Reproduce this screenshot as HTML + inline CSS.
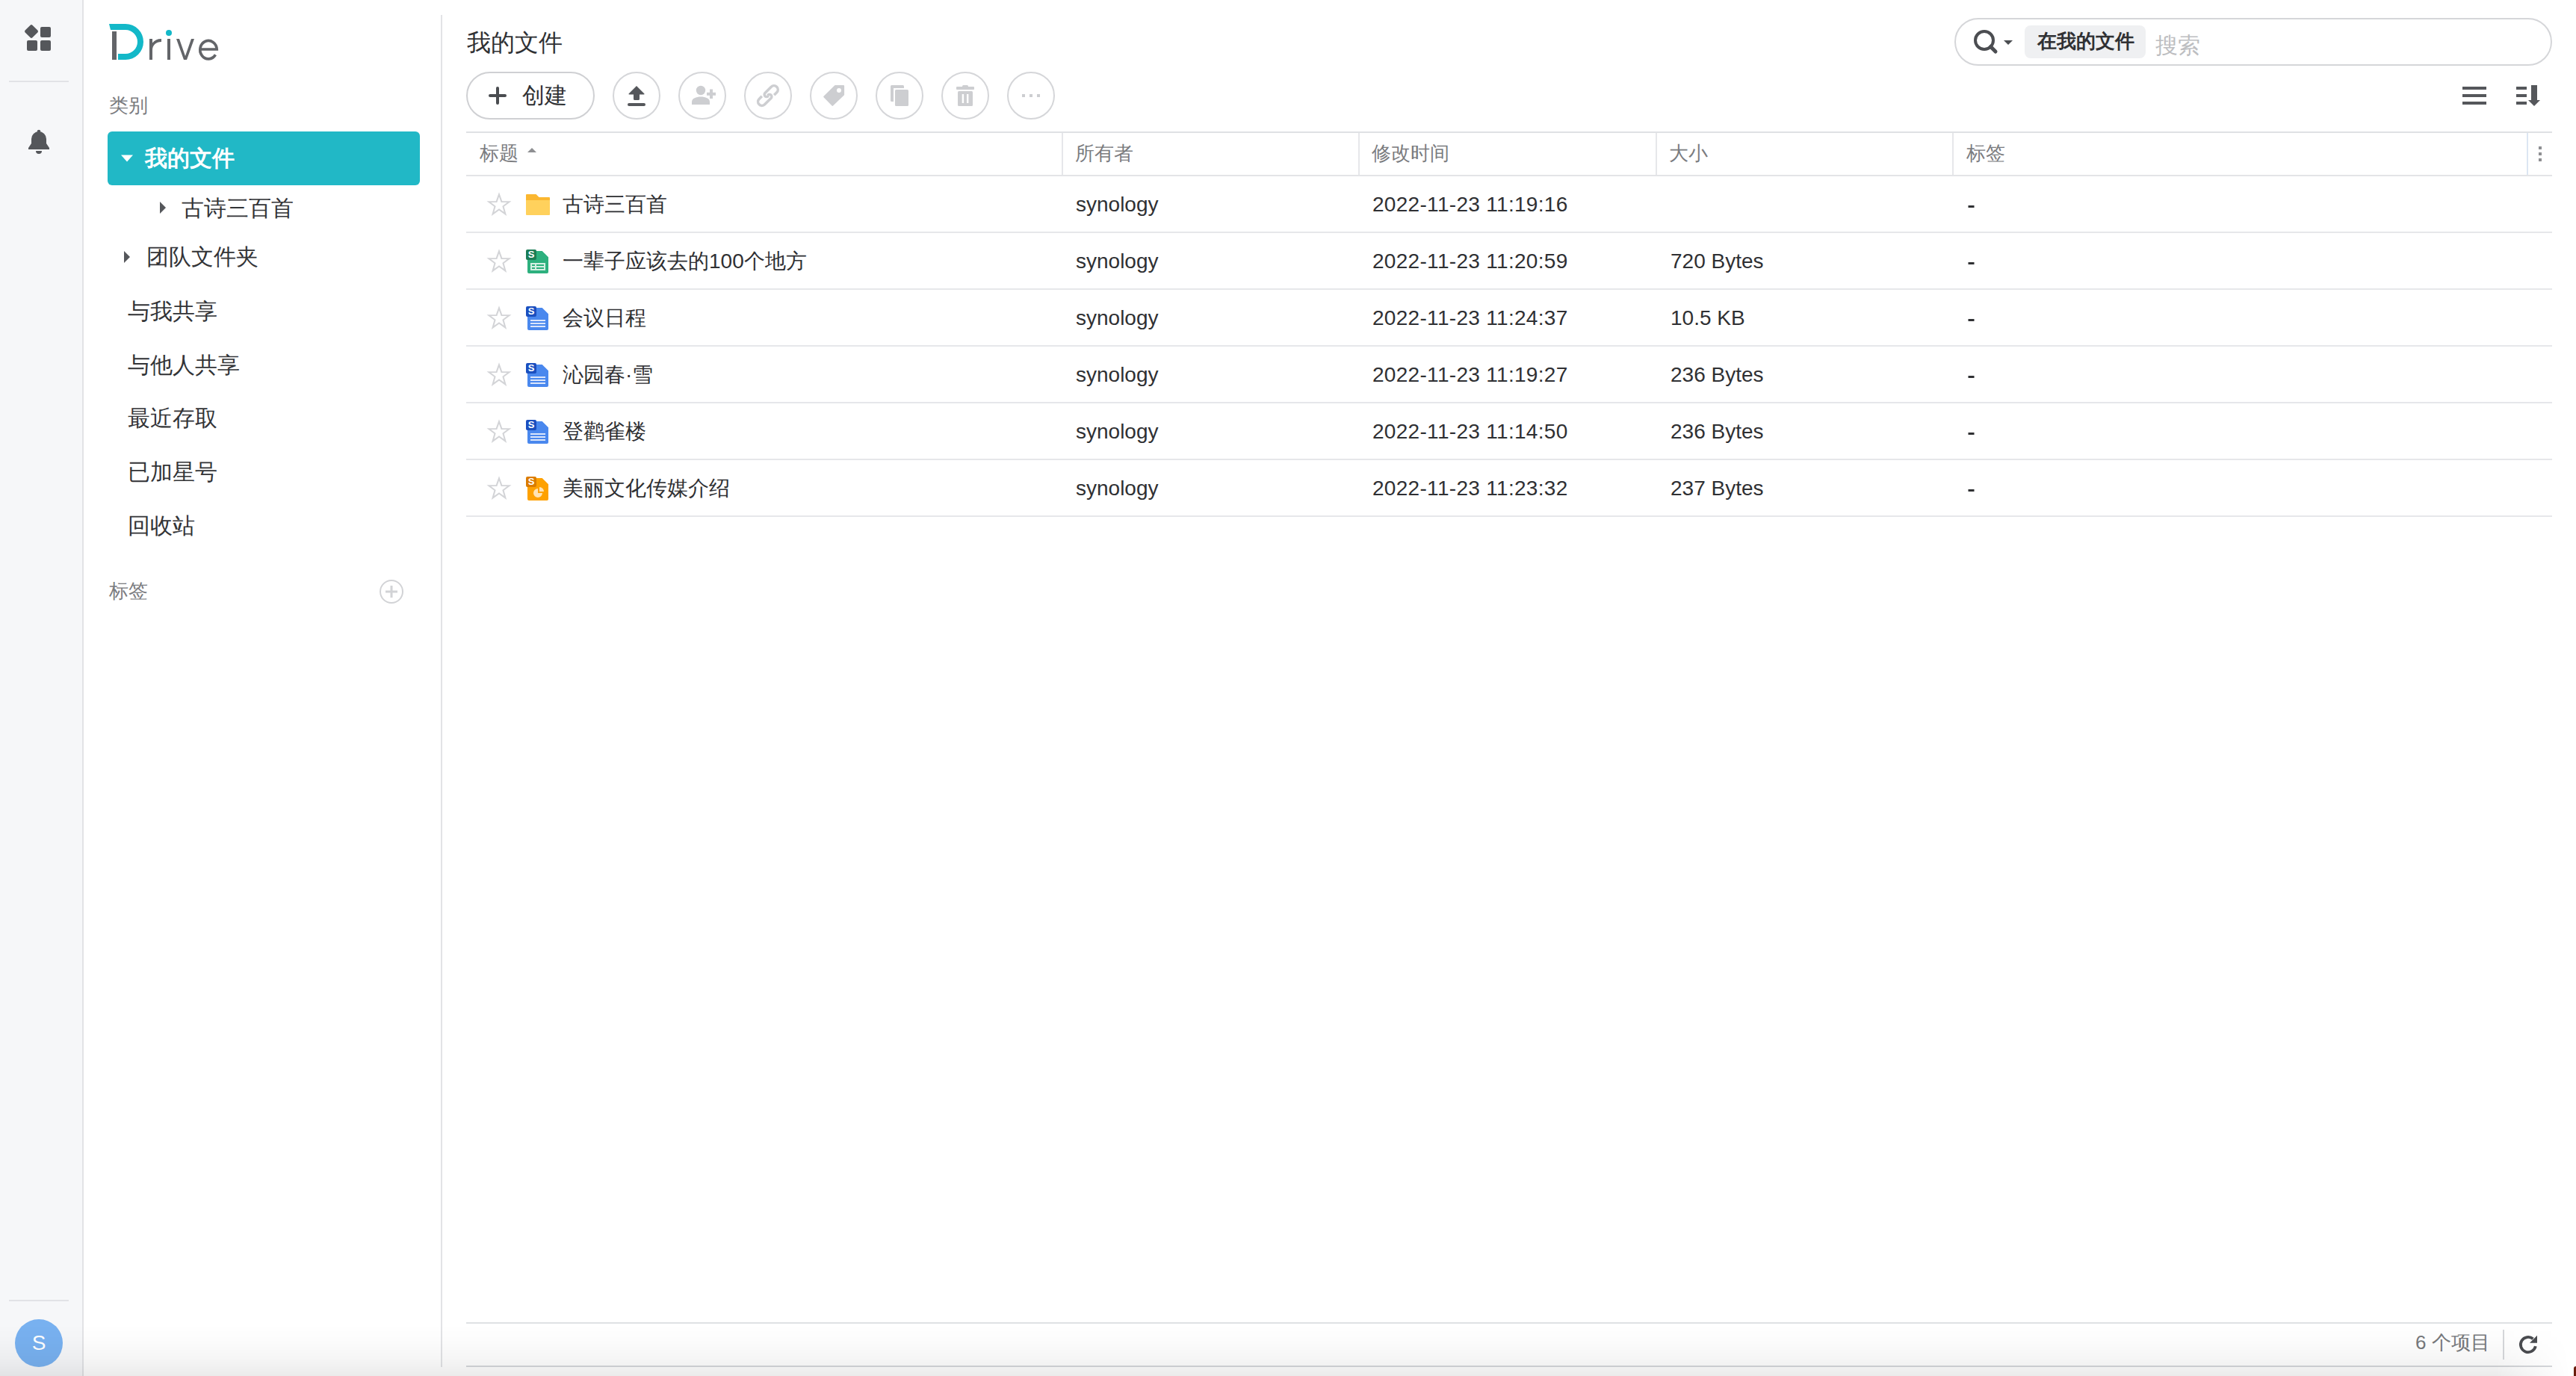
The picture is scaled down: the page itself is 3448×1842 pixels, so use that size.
<!DOCTYPE html>
<html><head><meta charset="utf-8">
<style>
html,body{margin:0;padding:0;width:3448px;height:1842px;overflow:hidden;background:#fff;}
body{font-family:"Liberation Sans",sans-serif;color:#303134;position:relative;}
.t{position:absolute;white-space:nowrap;line-height:40px;height:40px;}
.nav{font-size:30px;color:#333437;}
.hd{font-size:26px;color:#7b7c7f;}
.cell{font-size:28px;color:#2f3033;}
svg{position:absolute;left:0;top:0;}
</style></head><body>
<svg width="3448" height="1842" viewBox="0 0 3448 1842">
  <!-- left rail -->
  <rect x="0" y="0" width="110" height="1842" fill="#f6f7f9"/>
  <rect x="110" y="0" width="2" height="1842" fill="#e2e3e6"/>
  <g fill="#55575b">
    <rect x="35.1" y="35.1" width="13.8" height="13.8" rx="2" transform="rotate(45 42 42)"/>
    <rect x="54" y="36" width="14" height="14" rx="2"/>
    <rect x="36" y="54" width="14" height="14" rx="2"/>
    <rect x="54" y="54" width="14" height="14" rx="2"/>
  </g>
  <rect x="12" y="108" width="80" height="2" fill="#e2e3e6"/>
  <g fill="#55575b">
    <circle cx="52" cy="176" r="2.3"/>
    <path d="M42,192 L42,186 A10,10 0 0 1 62,186 L62,192 L66,198 L66,200 L38,200 L38,198 Z"/>
    <path d="M48,202 A4,4 0 0 0 56,202 Z"/>
  </g>
  <rect x="12" y="1740" width="80" height="2" fill="#e2e3e6"/>
  <circle cx="52" cy="1798" r="32" fill="#78b1f0"/>

  <!-- sidebar border -->
  <rect x="590" y="20" width="2" height="1810" fill="#e2e3e6"/>
  <!-- logo -->
  <path d="M146,32 H168 A24,24 0 0 1 168,80 H158 V72 H168 A16,16 0 0 0 168,40 H148 Z" fill="#13b8c8"/>
  <g fill="#636569">
    <rect x="150" y="42" width="6" height="38"/>
    <path d="M200,52 H204 V57.5 C206.5,54 210.5,52 216,52 V56 C209,56 204,60.5 204,67 V80 H200 Z"/>
    <rect x="224" y="52" width="4" height="28"/>
    <path d="M236,52 H240 L248,75 L256,52 H260 L250,80 H246 Z"/>
  </g>
  <circle cx="226" cy="44" r="4" fill="#13b8c8"/>
  <path d="M267.8,66 H290.2 A11.2,12.2 0 1 0 288.4,73.3" fill="none" stroke="#636569" stroke-width="3.7"/>

  <!-- selected nav -->
  <rect x="144" y="176" width="418" height="72" rx="6" fill="#21b8c6"/>
  <path d="M162,207.5 H178 L170,216.5 Z" fill="#fff"/>
  <path d="M214,270 V286 L222,278 Z" fill="#55575b"/>
  <path d="M166,336 V352 L174,344 Z" fill="#55575b"/>
  <circle cx="524" cy="792" r="15" fill="none" stroke="#d2d3d6" stroke-width="2"/>
  <rect x="516" y="790.5" width="16" height="3" fill="#d2d3d6"/>
  <rect x="522.5" y="784" width="3" height="16" fill="#d2d3d6"/>

  <!-- search box -->
  <rect x="2617" y="25" width="798" height="62" rx="31" fill="#fff" stroke="#d5d6d9" stroke-width="2"/>
  <circle cx="2656" cy="54" r="12" fill="none" stroke="#4b4d51" stroke-width="4"/>
  <line x1="2664.5" y1="62.5" x2="2671" y2="69" stroke="#4b4d51" stroke-width="5" stroke-linecap="round"/>
  <path d="M2682,54 H2694 L2688,60 Z" fill="#4b4d51"/>
  <rect x="2710" y="34" width="162" height="44" rx="8" fill="#eff0f2"/>

  <!-- create button -->
  <rect x="625" y="97" width="170" height="62" rx="31" fill="#fff" stroke="#cfd0d3" stroke-width="2"/>
  <rect x="654" y="126" width="24" height="4" rx="2" fill="#4a4c50"/>
  <rect x="664" y="116" width="4" height="24" rx="2" fill="#4a4c50"/>

  <!-- toolbar circles -->
  <g fill="#fff" stroke="#d5d6d9" stroke-width="2">
    <circle cx="852" cy="128" r="31"/>
    <circle cx="940" cy="128" r="31"/>
    <circle cx="1028" cy="128" r="31"/>
    <circle cx="1116" cy="128" r="31"/>
    <circle cx="1204" cy="128" r="31"/>
    <circle cx="1292" cy="128" r="31"/>
    <circle cx="1380" cy="128" r="31"/>
  </g>
  <!-- upload -->
  <g fill="#55575b">
    <path d="M852,115 L862.5,125.5 Q863,126.5 861.5,126.5 H856 V132.5 Q856,134 854.5,134 H849.5 Q848,134 848,132.5 V126.5 H842.5 Q841,126.5 841.5,125.5 Z"/>
    <rect x="840" y="138" width="24" height="4" rx="2"/>
  </g>
  <!-- user add -->
  <g fill="#cdced1">
    <circle cx="938" cy="121" r="6.2"/>
    <path d="M926,140 V136.5 C926,131.5 932,129.5 938,129.5 C944,129.5 950,131.5 950,136.5 V140 Z"/>
    <rect x="950" y="119.5" width="4" height="12.5"/>
    <rect x="946" y="123.8" width="12" height="4"/>
  </g>
  <!-- link -->
  <g fill="none" stroke="#cdced1" stroke-width="3.5" transform="translate(1028 128) rotate(-45)">
    <path d="M6.3,5.25 H11.3 A5.25,5.25 0 0 0 11.3,-5.25 H-0.4 A2.9,2.9 0 0 0 -0.4,0.55 H0.2"/>
    <path d="M-6.3,-5.25 H-11.5 A5.25,5.25 0 0 0 -11.5,5.25 H0.4 A2.9,2.9 0 0 0 0.4,-0.55 H-0.2"/>
  </g>
  <!-- tag -->
  <path d="M1117.8,115.2 H1129 V126.6 L1114.3,140.8 L1103.3,129.6 Z" fill="#cdced1" stroke="#cdced1" stroke-width="2.2" stroke-linejoin="round"/>
  <circle cx="1123" cy="121" r="3" fill="#fff"/>
  <!-- copy -->
  <rect x="1192" y="114" width="18" height="22" rx="1.5" fill="#cdced1"/>
  <rect x="1196" y="118" width="22" height="26" fill="#fff"/>
  <rect x="1198" y="120" width="18" height="22" rx="1.5" fill="#cdced1"/>
  <!-- trash -->
  <g fill="#cdced1">
    <rect x="1288" y="114" width="8" height="4" rx="1.5"/>
    <rect x="1280" y="116" width="24" height="4" rx="1"/>
    <rect x="1282" y="122" width="20" height="20" rx="1.5"/>
  </g>
  <rect x="1287.7" y="126" width="2.4" height="12" fill="#fff"/>
  <rect x="1294" y="126" width="2.4" height="12" fill="#fff"/>
  <!-- more -->
  <g fill="#cdced1">
    <rect x="1368" y="126" width="4" height="4"/>
    <rect x="1378" y="126" width="4" height="4"/>
    <rect x="1388" y="126" width="4" height="4"/>
  </g>
  <!-- list / sort -->
  <g fill="#55575b">
    <rect x="3296" y="116" width="32" height="4"/>
    <rect x="3296" y="126" width="32" height="4"/>
    <rect x="3296" y="136" width="32" height="4"/>
    <rect x="3368" y="116" width="14" height="4"/>
    <rect x="3368" y="126" width="14" height="4"/>
    <rect x="3368" y="136" width="14" height="4"/>
    <rect x="3388" y="114" width="8" height="21"/>
    <path d="M3384,134 H3400 L3392,142 Z"/>
  </g>

  <!-- table -->
  <rect x="624" y="176" width="2792" height="2" fill="#dfe1e4"/>
  <rect x="624" y="234" width="2792" height="2" fill="#e3e4e7"/>
  <g fill="#e6e7ea">
    <rect x="1421" y="178" width="2" height="56"/>
    <rect x="1818" y="178" width="2" height="56"/>
    <rect x="2216" y="178" width="2" height="56"/>
    <rect x="2613" y="178" width="2" height="56"/>
  </g>
  <rect x="3382" y="178" width="2" height="56" fill="#dce6f3"/>
  <path d="M706,204 H718 L712,198 Z" fill="#8e8f92"/>
  <g fill="#8e8f92">
    <rect x="3398" y="196" width="4" height="4"/>
    <rect x="3398" y="204" width="4" height="4"/>
    <rect x="3398" y="212" width="4" height="4"/>
  </g>
  <g fill="#e6e7ea">
    <rect x="624" y="310" width="2792" height="2"/>
    <rect x="624" y="386" width="2792" height="2"/>
    <rect x="624" y="462" width="2792" height="2"/>
    <rect x="624" y="538" width="2792" height="2"/>
    <rect x="624" y="614" width="2792" height="2"/>
    <rect x="624" y="690" width="2792" height="2"/>
  </g>
  <!-- stars -->
  <g id="stars" fill="none" stroke="#d3d4d7" stroke-width="2" stroke-linejoin="miter">
    <path id="st" d="M668,260.3 L671.4,269.9 L681.6,270.1 L673.5,276.3 L676.4,286.4 L668,280.4 L659.6,286.4 L662.5,276.3 L654.4,270.1 L664.6,269.9 Z"/>
    <use href="#st" y="76"/>
    <use href="#st" y="152"/>
    <use href="#st" y="228"/>
    <use href="#st" y="304"/>
    <use href="#st" y="380"/>
  </g>
  <!-- folder -->
  <path d="M704,261 Q704,260 705,260 H717.5 L721.5,264 H735 Q736,264 736,265 V268 H704 Z" fill="#fbb730"/>
  <path d="M704,268 H736 V287 Q736,288 735,288 H705 Q704,288 704,287 Z" fill="#ffd15c"/>
  <!-- sheet icon row2 at 704,334 -->
  <g transform="translate(704,334)">
    <path d="M2,4 Q2,2 4,2 H21.7 L30,10.3 V30 Q30,32 28,32 H4 Q2,32 2,30 Z" fill="#2db07e"/>
    <rect x="0" y="0" width="14" height="14" rx="2" fill="#1b7d56"/>
    <rect x="6" y="18" width="20" height="10" fill="#d3efe2"/>
    <g fill="#2db07e"><rect x="8" y="20" width="4" height="2"/><rect x="14" y="20" width="10" height="2"/><rect x="8" y="24" width="4" height="2"/><rect x="14" y="24" width="10" height="2"/></g>
  </g>
  <!-- doc icons -->
  <g id="doc" transform="translate(704,410)">
    <path d="M2,4 Q2,2 4,2 H21.7 L30,10.3 V30 Q30,32 28,32 H4 Q2,32 2,30 Z" fill="#4a88ee"/>
    <rect x="0" y="0" width="14" height="14" rx="2" fill="#1b4fbf"/>
    <g fill="#dbe6fb"><rect x="6" y="18" width="20" height="2"/><rect x="6" y="22" width="20" height="2"/><rect x="6" y="26" width="20" height="2"/></g>
  </g>
  <use href="#doc" y="76"/>
  <use href="#doc" y="152"/>
  <!-- slides -->
  <g transform="translate(704,638)">
    <path d="M2,4 Q2,2 4,2 H21.7 L30,10.3 V30 Q30,32 28,32 H4 Q2,32 2,30 Z" fill="#fea100"/>
    <rect x="0" y="0" width="14" height="14" rx="2" fill="#db7c00"/>
    <path d="M16,22 V16 A6,6 0 1 0 22,22 Z" fill="#ffe3b4"/>
    <path d="M18,20 V14 A6,6 0 0 1 24,20 Z" fill="#ffe3b4"/>
  </g>
  <!-- S letters on badges -->
  <!-- dashes -->
  <g fill="#2f3033">
    <rect x="2634.5" y="275" width="8" height="3"/>
    <rect x="2634.5" y="351" width="8" height="3"/>
    <rect x="2634.5" y="427" width="8" height="3"/>
    <rect x="2634.5" y="503" width="8" height="3"/>
    <rect x="2634.5" y="579" width="8" height="3"/>
    <rect x="2634.5" y="655" width="8" height="3"/>
  </g>
  <!-- footer -->
  <rect x="624" y="1770" width="2792" height="2" fill="#dfe1e4"/>
  <rect x="624" y="1828" width="2792" height="2" fill="#d6d8db"/>
  <rect x="3350" y="1780" width="2" height="40" fill="#d6d8db"/>
  <path d="M3390.5,1792.3 A10.1,10.1 0 1 0 3393.85,1802.2" fill="none" stroke="#4a4c50" stroke-width="3.8"/>
  <path d="M3396,1787.8 V1797.8 H3386 Z" fill="#4a4c50"/>
</svg>

<!-- badge letters -->
<div class="t" style="left:704px;top:334px;width:14px;height:14px;line-height:14px;font-size:13px;font-weight:bold;color:#fff;text-align:center">S</div>
<div class="t" style="left:704px;top:410px;width:14px;height:14px;line-height:14px;font-size:13px;font-weight:bold;color:#fff;text-align:center">S</div>
<div class="t" style="left:704px;top:486px;width:14px;height:14px;line-height:14px;font-size:13px;font-weight:bold;color:#fff;text-align:center">S</div>
<div class="t" style="left:704px;top:562px;width:14px;height:14px;line-height:14px;font-size:13px;font-weight:bold;color:#fff;text-align:center">S</div>
<div class="t" style="left:704px;top:638px;width:14px;height:14px;line-height:14px;font-size:13px;font-weight:bold;color:#fff;text-align:center">S</div>

<div class="t" style="left:20px;top:1778px;width:64px;text-align:center;font-size:28px;color:#fff">S</div>

<!-- sidebar texts -->
<div class="t hd" style="left:146px;top:121px">类别</div>
<div class="t nav" style="left:194px;top:192px;color:#fff;font-weight:bold">我的文件</div>
<div class="t nav" style="left:243px;top:259px">古诗三百首</div>
<div class="t nav" style="left:196px;top:324px">团队文件夹</div>
<div class="t nav" style="left:171px;top:397px">与我共享</div>
<div class="t nav" style="left:171px;top:469px">与他人共享</div>
<div class="t nav" style="left:171px;top:540px">最近存取</div>
<div class="t nav" style="left:171px;top:612px">已加星号</div>
<div class="t nav" style="left:171px;top:684px">回收站</div>
<div class="t hd" style="left:146px;top:771px">标签</div>

<!-- main -->
<div class="t" style="left:625px;top:37px;font-size:32px;color:#303134">我的文件</div>
<div class="t" style="left:2727px;top:35px;font-size:26px;color:#303134;font-weight:bold">在我的文件</div>
<div class="t" style="left:2885px;top:41px;font-size:30px;color:#bdbec1">搜索</div>
<div class="t" style="left:699px;top:108px;font-size:30px;color:#303134">创建</div>

<div class="t hd" style="left:642px;top:185px">标题</div>
<div class="t hd" style="left:1439px;top:185px">所有者</div>
<div class="t hd" style="left:1836px;top:185px">修改时间</div>
<div class="t hd" style="left:2234px;top:185px">大小</div>
<div class="t hd" style="left:2632px;top:185px">标签</div>

<div class="t cell" style="left:753px;top:254px">古诗三百首</div>
<div class="t cell" style="left:753px;top:330px">一辈子应该去的100个地方</div>
<div class="t cell" style="left:753px;top:406px">会议日程</div>
<div class="t cell" style="left:753px;top:482px">沁园春·雪</div>
<div class="t cell" style="left:753px;top:558px">登鹳雀楼</div>
<div class="t cell" style="left:753px;top:634px">美丽文化传媒介绍</div>

<div class="t cell" style="left:1440px;top:254px">synology</div>
<div class="t cell" style="left:1440px;top:330px">synology</div>
<div class="t cell" style="left:1440px;top:406px">synology</div>
<div class="t cell" style="left:1440px;top:482px">synology</div>
<div class="t cell" style="left:1440px;top:558px">synology</div>
<div class="t cell" style="left:1440px;top:634px">synology</div>

<div class="t cell" style="left:1837px;top:254px;letter-spacing:0.3px">2022-11-23 11:19:16</div>
<div class="t cell" style="left:1837px;top:330px;letter-spacing:0.3px">2022-11-23 11:20:59</div>
<div class="t cell" style="left:1837px;top:406px;letter-spacing:0.3px">2022-11-23 11:24:37</div>
<div class="t cell" style="left:1837px;top:482px;letter-spacing:0.3px">2022-11-23 11:19:27</div>
<div class="t cell" style="left:1837px;top:558px;letter-spacing:0.3px">2022-11-23 11:14:50</div>
<div class="t cell" style="left:1837px;top:634px;letter-spacing:0.3px">2022-11-23 11:23:32</div>

<div class="t cell" style="left:2236px;top:330px">720 Bytes</div>
<div class="t cell" style="left:2236px;top:406px">10.5 KB</div>
<div class="t cell" style="left:2236px;top:482px">236 Bytes</div>
<div class="t cell" style="left:2236px;top:558px">236 Bytes</div>
<div class="t cell" style="left:2236px;top:634px">237 Bytes</div>

<div class="t hd" style="left:3233px;top:1777px;color:#77797c">6 个项目</div>

<!-- bottom shade -->
<div style="position:absolute;left:0;top:1772px;width:3448px;height:70px;-webkit-mask-image:linear-gradient(to right,#000 0,#000 3340px,transparent 3440px);background:linear-gradient(to bottom,rgba(0,0,0,0) 0%,rgba(0,0,0,0.012) 30%,rgba(0,0,0,0.035) 65%,rgba(0,0,0,0.055) 82%,rgba(0,0,0,0.08) 100%);"></div>
<div style="position:absolute;left:3445px;top:1829px;width:3px;height:13px;background:#6a1c0c;border-radius:3px 0 0 0"></div>
</body></html>
